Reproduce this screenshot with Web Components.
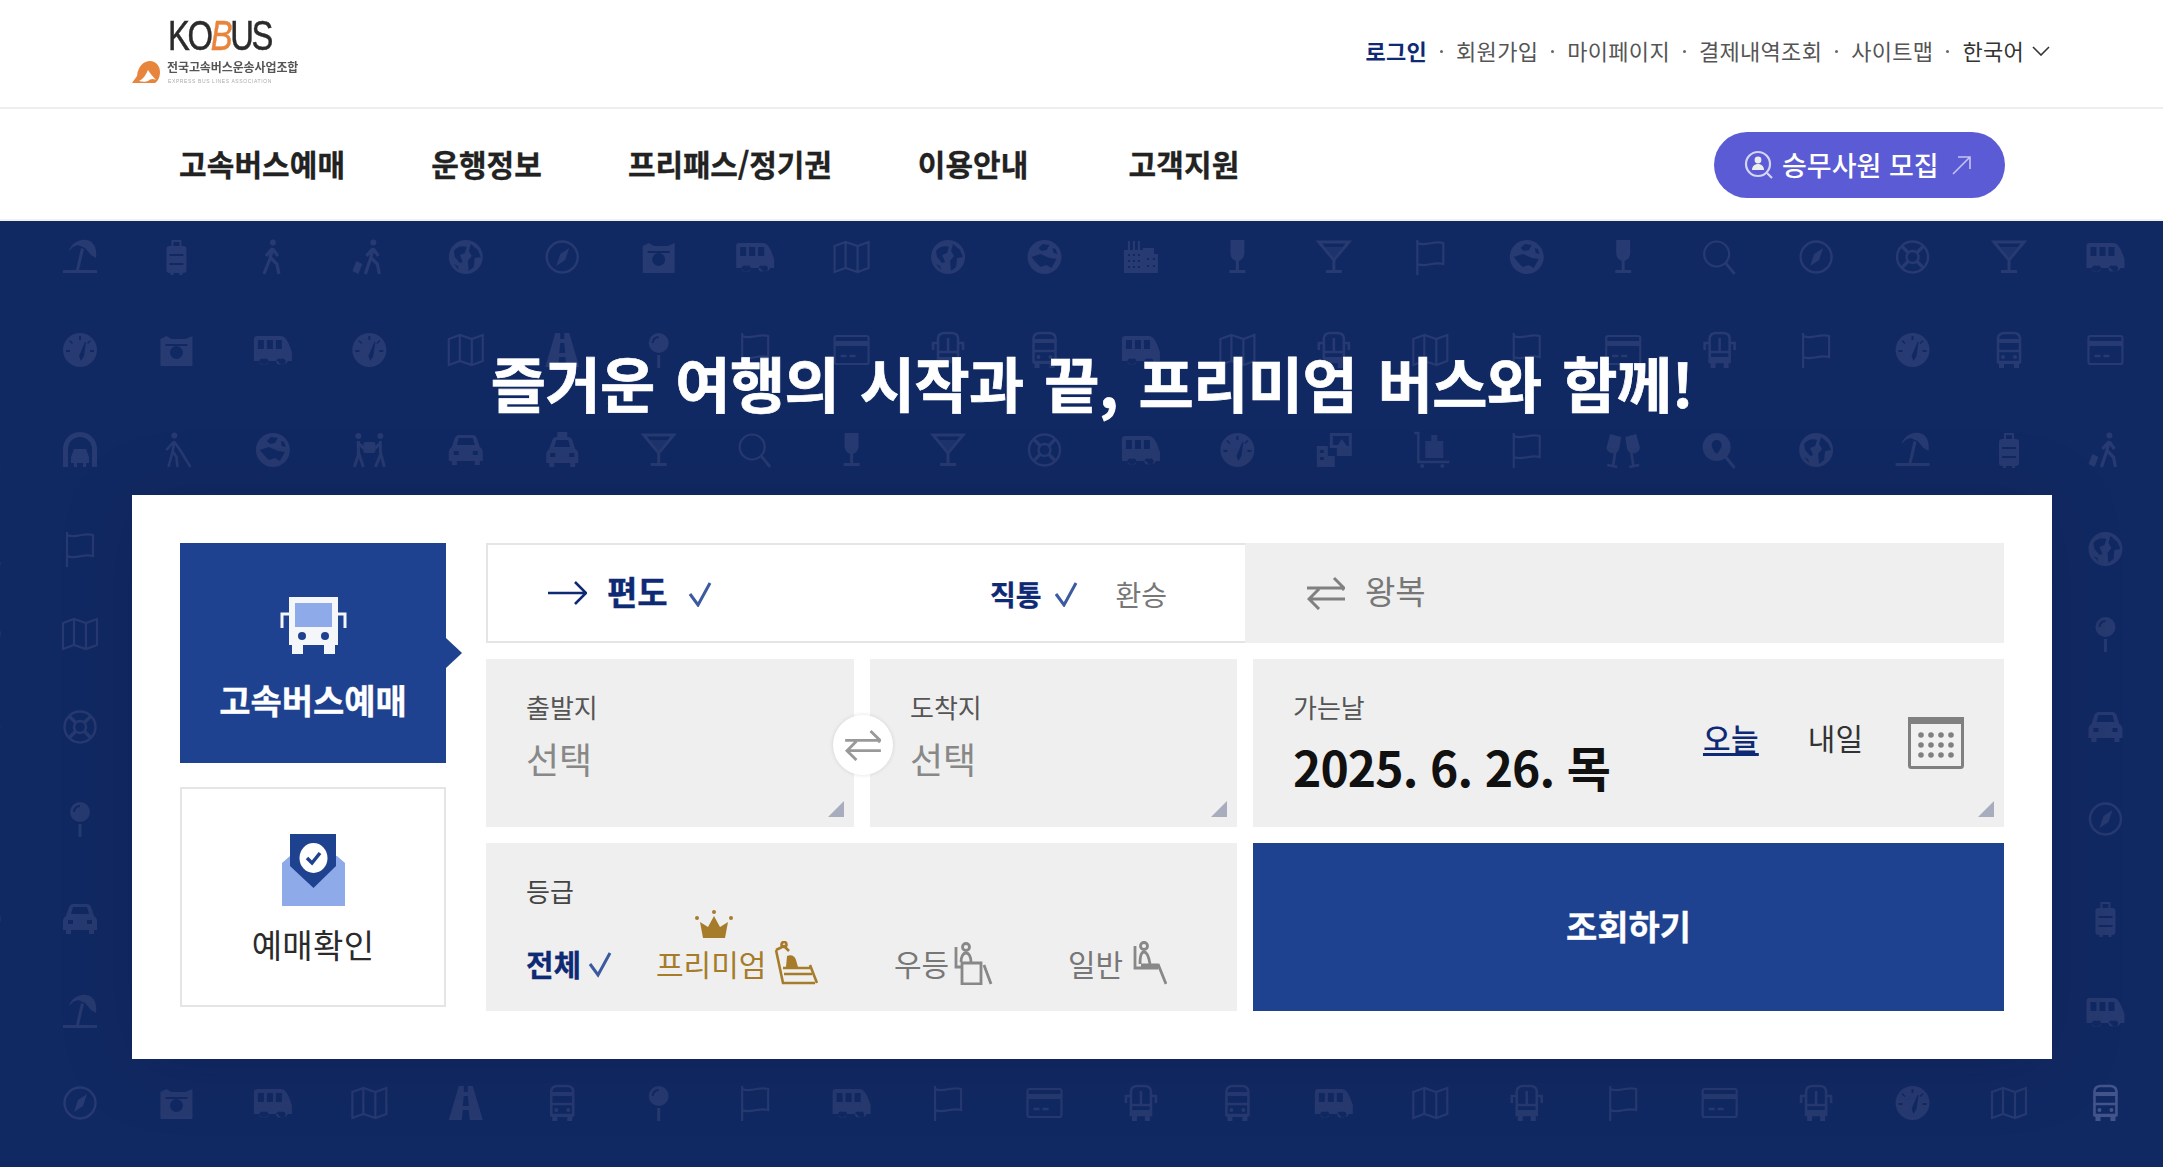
<!DOCTYPE html>
<html lang="ko">
<head>
<meta charset="utf-8">
<title>KOBUS</title>
<style>
  html, body { margin: 0; padding: 0; background: #fff; }
  body {
    font-family: "Noto Sans CJK KR", "Noto Sans", sans-serif;
    color: #333;
    overflow: hidden;
  }
</style>
</head>
<body>
<kb-header></kb-header>
<kb-nav></kb-nav>
<kb-hero></kb-hero>

<script>
const NAVY = '#0f2a75';
const BLUE = '#1f4290';

// Little helper, every element below does the same thing in its constructor
function shadow( host, html ) {
  const template = document.createElement( 'template' );
  template.innerHTML = html;
  const shadowRoot = host.attachShadow( {mode: 'open'} );
  shadowRoot.appendChild( template.content.cloneNode( true ) );
  return shadowRoot;
}

const CHECK = `<svg width="100%" height="100%" viewBox="0 0 24 24" fill="none" stroke="#3b5aa0" stroke-width="3"><path d="M2 12l8 11L22 1"/></svg>`;

class Logo extends HTMLElement {
  constructor() {
    super();
    shadow( this, `
      <style>
        :host { display: block; position: relative; width: 190px; height: 84px; filter: blur( .35px ); }
        .word {
          position: absolute; left: 36px; top: 10px; margin: 0;
          font: 400 42px/34px "Liberation Sans", sans-serif; color: #2b2b2b; -webkit-text-stroke: .5px #2b2b2b;
          letter-spacing: -3px; transform: scaleX( .78 ); transform-origin: 0 0; white-space: nowrap;
        }
        .word b { color: #e8853c; font-weight: 400; font-style: italic; -webkit-text-stroke: .5px #e8853c; }
        .ko { position: absolute; left: 35px; top: 50px; font-size: 12px; line-height: 16px; font-weight: 700; color: #555; letter-spacing: -.1px; white-space: nowrap; }
        .en { position: absolute; left: 36px; top: 69px; font: 5px/6px "Liberation Sans", sans-serif; color: #aaa; letter-spacing: .62px; white-space: nowrap; }
        svg { position: absolute; left: 0; top: 51px; }
      </style>
      <svg width="28" height="24" viewBox="0 0 28 24"><path fill="#e8853c" d="M0 23L5 16C6 6 12 1 18 1c6 0 10 5 10 11 0 5-2 9-5 11z"/><path fill="#fff" d="M7 21c4-2 7-6 9-11 2 3 5 7 8 10-3-2-6-1-8 1-2 1-6 1-9 0z"/></svg>
      <p class="word">KO<b>B</b>US</p>
      <span class="ko">전국고속버스운송사업조합</span>
      <span class="en">EXPRESS BUS LINES ASSOCIATION</span>
    `);
  }
}

class Header extends HTMLElement {
  constructor() {
    super();
    shadow( this, `
      <style>
        :host { display: block; box-sizing: border-box; height: 109px; border-bottom: 2px solid #eee; }
        .in { display: flex; align-items: flex-start; justify-content: space-between; width: 1918px; margin-left: 132px; height: 107px; }
        kb-logo { margin-top: 9px; }
        ul { display: flex; align-items: center; list-style: none; margin: 35px 0 0; padding: 0; font-size: 22px; line-height: 30px; color: #555; letter-spacing: .3px; }
        li { display: flex; align-items: center; }
        li + li::before { content: ""; width: 3px; height: 3px; border-radius: 50%; background: #666; margin: 2px 13px 0 13px; }
        .on { color: ${NAVY}; font-weight: 700; }
        .lang { color: #333; }
        svg { margin-left: 8px; margin-top: 2px; }
      </style>
      <div class="in">
        <kb-logo></kb-logo>
        <ul>
          <li><span class="on">로그인</span></li>
          <li>회원가입</li>
          <li>마이페이지</li>
          <li>결제내역조회</li>
          <li>사이트맵</li>
          <li><span class="lang">한국어</span><svg width="18" height="10" viewBox="0 0 18 10" fill="none" stroke="#333" stroke-width="1.6"><path d="M1 1l8 8 8-8"/></svg></li>
        </ul>
      </div>
    `);
  }
}

class Nav extends HTMLElement {
  constructor() {
    super();
    shadow( this, `
      <style>
        :host { display: block; box-sizing: border-box; height: 112px; border-bottom: 2px solid #f2f2f2; }
        nav { display: flex; align-items: center; width: 1826px; margin-left: 179px; height: 110px; }
        a { font-size: 30px; font-weight: 700; color: #222; letter-spacing: .1px; margin: -3px 86px 0 0; white-space: nowrap; -webkit-text-stroke: .3px #222; }
        a:nth-child( 3 ) { letter-spacing: -.15px; }
        a.wide { margin-right: 100px; }
        .pill {
          display: flex; align-items: center; margin: 2px 0 0 auto; box-sizing: border-box;
          width: 291px; height: 66px; border-radius: 33px; background: #5b5bd6; color: #fff;
          font-size: 27px; font-weight: 500; padding-left: 30px; white-space: nowrap;
        }
        .pill .t { margin: -2px 13px 0 8px; }
      </style>
      <nav>
        <a>고속버스예매</a>
        <a>운행정보</a>
        <a>프리패스/정기권</a>
        <a class="wide">이용안내</a>
        <a>고객지원</a>
        <div class="pill">
          <svg width="30" height="30" viewBox="0 0 30 30" fill="none" stroke="#d5d5f5" stroke-width="2.2"><circle cx="14" cy="14" r="12"/><path d="M23 23l5 5"/><circle cx="14" cy="10" r="3.4" fill="#eee" stroke="none"/><path d="M8 20c0-4 3-6 6-6s6 2 6 6z" fill="#eee" stroke="none"/></svg>
          <span class="t">승무사원 모집</span>
          <svg width="20" height="20" viewBox="0 0 20 20" fill="none" stroke="#c5c5f0" stroke-width="1.6"><path d="M1 19L18 2M6 2h12v12"/></svg>
        </div>
      </nav>
    `);
  }
}

// Background artwork of the hero: all icons of the travel pattern on one svg
const SYMBOLS = {
  umbrella: `<path d="M7 12C9 4 19-2 28 2c5 3 7 9 6 17l-5-3-6-7-7-3-5 2z"/><path d="M19 9l3 1-5 21h-3z"/><rect x="1" y="31" width="34" height="3"/>`,
  luggage: `<path fill-rule="evenodd" d="M13 7V1h10v6h2a3 3 0 0 1 3 3v21a3 3 0 0 1-3 3h-1v2h-3v-2h-6v2h-3v-2h-1a3 3 0 0 1-3-3V10a3 3 0 0 1 3-3zM15 7h6V3h-6zM11 15v2h14v-2zM11 24v2h14v-2z"/>`,
  walk: `<circle cx="18" cy="3.500" r="3"/><path d="M18 9l-3 11-6 15M16 19l6 6 2 10M17 10l-6 7M18 10l5 7" fill="none" stroke="currentColor" stroke-width="3.200"/>`,
  walkbag: `<circle cx="22" cy="3.500" r="3"/><path d="M22 9l-3 11-5 15M20 19l6 6 2 10M21 10l-6 7M22 10l5 7" fill="none" stroke="currentColor" stroke-width="3.200"/><path d="M5 22l6 3-4 10-6-3z"/>`,
  cane: `<circle cx="16" cy="3.500" r="3"/><path d="M16 9l-2 11-4 15M14 19l4 6 1 10M15 10l-7 8M16 10l5 7M21 17l11 18" fill="none" stroke="currentColor" stroke-width="2.600"/>`,
  globe: `<path fill-rule="evenodd" d="M18 1a17 17 0 1 0 0 34a17 17 0 1 0 0-34zM6 12c3-4 8-6 13-4l-2 6-5 2 3 7-3 1-5-6zM23 5l7 6 3 7-6 1-1 9-5 4-1-10 4-5-3-5zM6 25l4 2 1 4z"/>`,
  globe2: `<path fill-rule="evenodd" d="M18 1a17 17 0 1 0 0 34a17 17 0 1 0 0-34zM16 5l7 1-3 5-5 1-3-3zM5 18l9-3 9 4 7 1-5 9-5-3-6 2-5-5zM26 9l3 1 2 5-4-1z"/>`,
  compass: `<circle cx="18" cy="18" r="15.500" fill="none" stroke="currentColor" stroke-width="2.400"/><path d="M25 9l-4 12-9 6 4-12z"/>`,
  camera: `<path fill-rule="evenodd" d="M2 7l6-3 5 3h14l7-3v29a1 1 0 0 1-1 1H3a1 1 0 0 1-1-1zM18 14a6.500 6.500 0 1 0 0 13a6.500 6.500 0 1 0 0-13zM7 12v2h22v-2z"/>`,
  van: `<path fill-rule="evenodd" d="M-1 7a3 3 0 0 1 3-3h24c4 0 6 4 8 8l3 8v9h-4a5.500 5.500 0 0 1-10 0H14a5.500 5.500 0 0 1-10 0H-1zM3 8v9h6V8zM12 8v9h6V8zM21 8v9h6V8zM9 27a3 3 0 1 0 0 5a3 3 0 1 0 0-5zM26 27a3 3 0 1 0 0 5a3 3 0 1 0 0-5z"/>`,
  map: `<path fill="none" stroke="currentColor" stroke-width="2.200" d="M1 7l11-4 12 4 11-4v26l-11 4-12-4-11 4zM12 3v26M24 7v26"/>`,
  flag: `<path fill="none" stroke="currentColor" stroke-width="2.200" d="M5 1v35M5 4c9 4 16-3 26 0v21c-10-3-17 4-26 0"/>`,
  city: `<path fill-rule="evenodd" d="M1 34V11h4V2h2v9h3V2h2v9h3V2h2v9h3V9h11v6h4v19zM5 15v2h2v-2zM10 15v2h2v-2zM15 15v2h2v-2zM5 21v2h2v-2zM10 21v2h2v-2zM15 21v2h2v-2zM5 27v2h2v-2zM10 27v2h2v-2zM15 27v2h2v-2zM24 19v2h2v-2zM30 19v2h2v-2zM24 26v2h2v-2zM30 26v2h2v-2z"/>`,
  wine: `<path d="M11 1h14v13a7 8 0 0 1-14 0z"/><rect x="16.500" y="21" width="3" height="11"/><rect x="10" y="31" width="16" height="3"/>`,
  martini: `<path fill="none" stroke="currentColor" stroke-width="3" d="M3 3h30L18 21zM18 21v11"/><path d="M9 8h18l-9 11z" opacity=".6"/><rect x="10" y="31" width="16" height="3"/>`,
  search: `<circle cx="15" cy="15" r="12.500" fill="none" stroke="currentColor" stroke-width="2.200"/><path d="M24 24l9 11" stroke="currentColor" stroke-width="2.800"/>`,
  buoy: `<g fill="none" stroke="currentColor" stroke-width="2.400"><circle cx="18" cy="18" r="15.500"/><circle cx="18" cy="18" r="6"/><path d="M7 7l7 7M29 7l-7 7M7 29l7-7M29 29l-7-7" stroke-width="3.200"/></g>`,
  gauge: `<path fill-rule="evenodd" d="M18 1a17 17 0 1 0 0 34a17 17 0 1 0 0-34zM17 4v4h2V4zM7 9l3 3 1-1-3-3zM28 8l-3 3 1 1 3-3zM23 10l-6 14 2 5 3-5 2-14zM4 18v2h4v-2zM28 18v2h4v-2z"/>`,
  road: `<path fill-rule="evenodd" d="M11 1h5v6h4V1h5l10 34H22l-1-10h-6l-1 10H1zM16 11l-1 10h6l-1-10z"/>`,
  pin: `<path fill-rule="evenodd" d="M18 1a10 10 0 1 0 0 20a10 10 0 1 0 0-20zM18 4a7 7 0 0 0-7 7h2a5 5 0 0 1 5-5z"/><rect x="16.500" y="23" width="3" height="13"/>`,
  card: `<rect x="1" y="4" width="34" height="28" rx="2" fill="none" stroke="currentColor" stroke-width="2.200"/><rect x="1" y="9" width="34" height="5"/><path d="M7 24h6M16 24h6" stroke="currentColor" stroke-width="2.400"/>`,
  bus: `<path fill="none" stroke="currentColor" stroke-width="2.600" d="M7 6c0-3 3-5 6-5h10c3 0 6 2 6 5v24H7zM7 19h22"/><path d="M7 7h22v4H7zM7 29h22v3H7zM8 32h5v4H8zM23 32h5v4h-5z"/><circle cx="12" cy="25" r="2"/><circle cx="24" cy="25" r="2"/>`,
  busround: `<path fill="none" stroke="currentColor" stroke-width="2.600" d="M8 6c0-3 3-5 6-5h8c3 0 6 2 6 5v24H8zM8 20h20M18 6v14M8 11H3v7M28 11h5v7"/><path d="M8 25h20v6H8zM9 31h5v5H9zM22 31h5v5h-5z"/>`,
  tunnel: `<path fill-rule="evenodd" d="M1 35V17a17 17 0 0 1 34 0v18h-5V17a12 12 0 0 0-24 0v18zM12 17h12l3 8v6h-3v4h-3v-4h-6v4h-3v-4H9v-6z"/>`,
  movers: `<circle cx="7" cy="4" r="3"/><circle cx="29" cy="4" r="3"/><path d="M7 9v14l-4 12M7 20l5 15M29 9v14l-5 12M29 20l4 15M7 11l6 6M29 11l-6 6" fill="none" stroke="currentColor" stroke-width="3"/><rect x="12" y="10" width="12" height="11" rx="2"/>`,
  car: `<path fill-rule="evenodd" d="M4 15l3-9c1-2 2-3 4-3h14c2 0 3 1 4 3l3 9c2 1 3 3 3 5v9h-3v4h-5v-4H9v4H4v-4H1v-9c0-2 1-4 3-5zM9 13h18l-2-7H11zM6 19v4h5v-4zM25 19v4h5v-4z"/>`,
  taxi: `<rect x="13" y="0" width="10" height="5"/><path fill-rule="evenodd" d="M5 17l3-9c1-2 2-3 4-3h12c2 0 3 1 4 3l3 9c2 1 3 3 3 5v9h-3v4h-5v-4H10v4H5v-4H2v-9c0-2 1-4 3-5zM10 15h16l-2-7H12zM6 21v4h5v-4zM25 21v4h5v-4z"/>`,
  photos: `<path fill-rule="evenodd" d="M14 1h22v23H21v-8h-7zM17 4v9h5l4-6 5 7 2 0V4z"/><path fill-rule="evenodd" d="M1 14h11v21H10V35H1zM4 18v3h4v-3zM4 25v3h4v-3zM12 24h7v11h-7z"/>`,
  cart: `<path fill="none" stroke="currentColor" stroke-width="2.400" d="M2 1h4v29h31"/><path d="M13 9h6V3h6v6h6v17H13z" opacity=".9"/><circle cx="10" cy="34" r="2"/><circle cx="30" cy="34" r="2"/>`,
  cheers: `<path d="M5 2l11 3-2 12c-1 4-5 5-8 4-3-1-6-4-4-8z"/><path d="M31 2L20 5l2 12c1 4 5 5 8 4 3-1 6-4 4-8z"/><path d="M10 20l-2 13M26 20l2 13M2 33l10 2M24 35l10-2" fill="none" stroke="currentColor" stroke-width="2.600"/>`,
  findpin: `<path fill-rule="evenodd" d="M15 1a14 14 0 1 0 0 28a14 14 0 1 0 0-28zM15 8a5 5 0 0 0-5 5c0 4 5 9 5 9s5-5 5-9a5 5 0 0 0-5-5z"/><path d="M24 25l9 11" stroke="currentColor" stroke-width="3"/>`
};

const ROW_Y = [ 257, 350, 450, 549, 634, 727, 819, 919, 1012, 1103 ];
const ROWS = {
  0: 'umbrella luggage walk walkbag globe compass camera van map globe globe2 city wine martini flag globe2 wine search compass buoy martini van',
  1: 'gauge camera van gauge map road pin flag card busround bus van map busround map flag card busround flag gauge bus card',
  2: 'tunnel cane globe2 movers car taxi martini search wine martini buoy van gauge photos cart flag cheers findpin globe umbrella luggage walkbag',
  9: 'compass camera van map road bus pin flag van flag card busround bus van map busround flag card busround gauge map bus'
};
const LEFT = [ , , , 'flag', 'map', 'buoy', 'pin', 'car', 'umbrella' ];
const RIGHT = [ , , , 'globe', 'pin', 'car', 'compass', 'luggage', 'van' ];
const OFF = [ , , 'road', 'umbrella', 'globe', 'buoy', 'pin', 'globe', 'pin' ];

class Pattern extends HTMLElement {
  constructor() {
    super();
    const defs = Object.keys( SYMBOLS ).map( ( name ) => `<symbol id="${name}" viewBox="-3 -3 42 42" overflow="visible">${SYMBOLS[name]}</symbol>` ).join( '' );
    const cell = ( name, col, row, extra = '' ) => {
      if( !name ) return '';
      const x = 80 + col * 96.45 - 21;
      const y = ROW_Y[row] - 221 - 21;
      return `<use href="#${name}" x="${x}" y="${y}" width="42" height="42" ${extra}/>`;
    };
    let cells = '';
    Object.keys( ROWS ).forEach( ( row ) => {
      ROWS[row].split( ' ' ).forEach( ( name, col ) => {
        cells += cell( name, col, Number( row ), ( row === '9' && col === 21 ) ? 'color="#43548a"' : '' );
      } );
    } );
    LEFT.forEach( ( name, row ) => cells += cell( name, 0, row ) );
    RIGHT.forEach( ( name, row ) => cells += cell( name, 21, row ) );
    OFF.forEach( ( name, row ) => cells += cell( name, -1, row ) );
    shadow( this, `
      <style>
        :host { display: block; position: absolute; inset: 0; overflow: hidden; }
        svg { display: block; color: #273a71; fill: currentColor; }
      </style>
      <svg width="2163" height="946"><defs>${defs}</defs>${cells}</svg>
    `);
  }
}

class Tab extends HTMLElement {
  constructor() {
    super();
    shadow( this, `
      <style>
        :host {
          display: flex; flex-direction: column; align-items: center; position: relative; box-sizing: border-box;
          height: 220px; border: 2px solid #e5e5e5; padding-top: 45px; color: #2b2b2b; font-size: 33px; line-height: 44px; letter-spacing: .3px;
        }
        :host( [active] ) { background: ${BLUE}; border-color: ${BLUE}; color: #fff; font-weight: 700; padding-top: 52px; font-size: 34px; letter-spacing: 0; -webkit-text-stroke: .3px #fff; }
        :host( [active] )::after {
          content: ""; position: absolute; right: -18px; top: 93px; width: 16px; height: 30px;
          background: ${BLUE}; clip-path: polygon( 0 0, 100% 50%, 0 100% );
        }
        .label { white-space: nowrap; }
      </style>
      <slot name="icon"></slot>
      <span class="label"><slot></slot></span>
    `);
  }
}

class Field extends HTMLElement {
  constructor() {
    super();
    shadow( this, `
      <style>
        :host {
          display: block; position: relative; box-sizing: border-box; height: 168px; background: #efefef;
          padding: 33px 0 0 40px;
        }
        .label { display: block; font-size: 26px; line-height: 30px; color: #555; }
        .corner {
          position: absolute; right: 10px; bottom: 10px; width: 16px; height: 16px;
          background: #a8adbd; clip-path: polygon( 100% 0, 100% 100%, 0 100% );
        }
      </style>
      <span class="label"><slot name="label"></slot></span>
      <slot></slot>
      <i class="corner" part="corner"></i>
    `);
  }
}

class Seat extends HTMLElement {
  constructor() {
    super();
    const kind = this.getAttribute( 'kind' );
    const art = {
      premium: `<svg width="44" height="44" viewBox="0 0 44 44" fill="none" stroke="#a67c2a" stroke-width="2.600"><path d="M2 9l8-4 5 5M2 9l7 33h32M36 24l7 18M9 27h27M10 33h28"/><circle cx="10" cy="3.500" r="2.500"/><path d="M13 15c4-2 8 0 9 4l2 7H12z" fill="#a67c2a" stroke="none"/></svg>`,
      prestige: `<svg width="40" height="44" viewBox="0 0 40 44" fill="none" stroke="#888" stroke-width="2.800"><path d="M3 6v20h6M9 22h19v21H9z"/><circle cx="13" cy="6" r="3.500"/><path d="M8 21c0-5 2-9 5-9s5 4 5 9M31 24l7 19"/></svg>`,
      normal: `<svg width="34" height="44" viewBox="0 0 34 44" fill="none" stroke="#888" stroke-width="2.800"><path d="M2 5v22h22v-3H8"/><circle cx="11" cy="5" r="3.500"/><path d="M7 23c0-8 1-12 4-12s5 6 6 12M25 23l8 20"/></svg>`
    }[kind];
    shadow( this, `<style>:host { display: block; line-height: 0; }</style>${art}` );
  }
}

class Option extends HTMLElement {
  constructor() {
    super();
    shadow( this, `
      <style>
        :host { display: flex; align-items: center; position: relative; height: 40px; font-size: 30px; line-height: 40px; color: #777; white-space: nowrap; }
        :host( [on] ) { color: ${NAVY}; font-weight: 700; -webkit-text-stroke: .3px ${NAVY}; }
        :host( [gold] ) { color: #a67c2a; }
        ::slotted( kb-seat ) { margin-left: 8px; }
        ::slotted( .crown ) { position: absolute; left: 39px; top: -33px; }
      </style>
      <slot></slot>
    `);
  }
}

const SWAP = ( w, h, color ) => `<svg width="${w}" height="${h}" viewBox="0 0 38 34" fill="none" stroke="${color}" stroke-width="3"><path d="M0 12h36M27 2l10 10-2 2M38 23H3M12 13L2 23l10 10"/></svg>`;

class Booking extends HTMLElement {
  constructor() {
    super();
    shadow( this, `
      <style>
        :host {
          display: grid; grid-template-columns: 266px 1518px; gap: 40px; box-sizing: border-box; position: relative;
          width: 1920px; height: 564px; padding: 48px; background: #fff;
          box-shadow: 0 6px 70px rgba( 0, 0, 30, .16 );
        }
        .side { display: flex; flex-direction: column; gap: 24px; }
        .side svg { display: block; margin-bottom: 24px; }
        .side .mail { margin-bottom: 16px; }
        .form { display: grid; grid-template-columns: 751px 751px; grid-template-rows: 100px 168px 168px; gap: 16px; }
        .way { grid-column: 1 / 3; display: grid; grid-template-columns: 759px 759px; }
        .one { display: flex; align-items: center; box-sizing: border-box; border: 2px solid #e5e5e5; border-right: 0; padding: 0 78px 0 60px; }
        .one b { font-size: 33px; color: ${NAVY}; margin: -4px 20px 0; line-height: 44px; -webkit-text-stroke: .3px ${NAVY}; }
        .one .c1 { width: 24px; height: 26px; margin-top: 2px; }
        .one .direct { margin-left: auto; font-size: 28px; margin-right: 13px; margin-top: 2px; }
        .one .c2 { width: 24px; height: 26px; margin-top: 2px; }
        .one .sub { font-size: 28px; color: #777; margin-left: 37px; line-height: 44px; margin-top: 2px; }
        .two { display: flex; align-items: center; background: #efefef; padding-left: 62px; font-size: 33px; color: #777; line-height: 44px; }
        .two span { margin-top: -6px; margin-left: 20px; }
        .pair { display: grid; grid-template-columns: 368px 367px; gap: 16px; position: relative; }
        .val { display: block; margin-top: 14px; font-size: 36px; line-height: 44px; color: #888; }
        .swap {
          position: absolute; left: 347px; top: 56px; width: 60px; height: 60px; border-radius: 50%; background: #fff;
          box-shadow: 0 0 4px rgba( 0, 0, 0, .12 ); display: flex; align-items: center; justify-content: center;
        }
        .date { position: relative; }
        .day { display: block; margin-top: 14px; font-size: 48px; font-weight: 700; line-height: 60px; color: #111; letter-spacing: -.9px; white-space: nowrap; }
        .quick { position: absolute; display: flex; align-items: center; right: 40px; top: 58px; font-size: 30px; line-height: 40px; color: #333; }
        .quick u, .quick span { position: relative; top: -6px; }
        .quick u { color: ${NAVY}; font-weight: 500; letter-spacing: .3px; text-decoration-thickness: 3px; text-underline-offset: 3px; margin-right: 49px; }
        .quick svg { margin-left: 45px; }
        .grade { display: block; position: relative; height: 168px; box-sizing: border-box; background: #efefef; padding: 33px 0 0 40px; }
        .grade .label { display: block; font-size: 26px; line-height: 30px; color: #444; }
        .opts { display: flex; margin-top: 37px; }
        .opts kb-option:nth-child( 1 ) { width: 130px; }
        .opts kb-option:nth-child( 2 ) { width: 238px; }
        .opts kb-option:nth-child( 3 ) { width: 174px; }
        .go { display: flex; align-items: center; justify-content: center; background: ${BLUE}; color: #fff; font-size: 34px; font-weight: 700; padding-bottom: 3px; -webkit-text-stroke: .3px #fff; }
      </style>
      <div class="side">
        <kb-tab active>
          <svg slot="icon" width="67" height="57" viewBox="0 0 67 57">
            <path fill="#f5f6fa" d="M9 0h49v48h-3v9H44v-9H23v9H12v-9H9z"/>
            <path fill="#8eaae8" d="M15 6h37v24H15z"/>
            <circle cx="22" cy="39" r="4" fill="${BLUE}"/><circle cx="45" cy="39" r="4" fill="${BLUE}"/>
            <path fill="none" stroke="#f5f6fa" stroke-width="3" d="M9 17H2v14M58 17h7v14"/>
          </svg>
          고속버스예매
        </kb-tab>
        <kb-tab>
          <svg class="mail" slot="icon" width="63" height="72" viewBox="0 0 63 72">
            <path fill="#8eaae8" d="M0 29l8-7h47l8 7v43H0z"/>
            <path fill="${BLUE}" d="M8 0h46v32L31.500 54 8 32z"/>
            <ellipse cx="31.500" cy="24" rx="14" ry="15" fill="#fff"/>
            <path fill="none" stroke="${BLUE}" stroke-width="3.500" d="M25 24l5 5 8-10"/>
          </svg>
          예매확인
        </kb-tab>
      </div>
      <div class="form">
        <div class="way">
          <div class="one">
            <svg width="39" height="26" viewBox="0 0 39 26" fill="none" stroke="${NAVY}" stroke-width="2.600"><path d="M0 13h37M27 2l11 11-11 11"/></svg>
            <b>편도</b>
            <span class="c1">${CHECK}</span>
            <b class="direct">직통</b>
            <span class="c2">${CHECK}</span>
            <span class="sub">환승</span>
          </div>
          <div class="two">
            ${SWAP( 38, 34, '#808080' )}
            <span>왕복</span>
          </div>
        </div>
        <div class="pair">
          <kb-field><span slot="label">출발지</span><span class="val">선택</span></kb-field>
          <kb-field><span slot="label">도착지</span><span class="val">선택</span></kb-field>
          <div class="swap">${SWAP( 36, 32, '#999' )}</div>
        </div>
        <kb-field class="date">
          <span slot="label">가는날</span>
          <span class="day">2025. 6. 26. 목</span>
          <div class="quick">
            <u>오늘</u>
            <span>내일</span>
            <svg width="56" height="52" viewBox="0 0 56 52"><rect x="1.500" y="1.500" width="53" height="49" rx="2" fill="#f0f0f0" stroke="#808080" stroke-width="3"/><rect x="0" y="0" width="56" height="7" fill="#808080"/><g fill="#808080"><circle cx="13" cy="18" r="2.800"/><circle cx="23" cy="18" r="2.800"/><circle cx="33" cy="18" r="2.800"/><circle cx="43" cy="18" r="2.800"/><circle cx="13" cy="28" r="2.800"/><circle cx="23" cy="28" r="2.800"/><circle cx="33" cy="28" r="2.800"/><circle cx="43" cy="28" r="2.800"/><circle cx="13" cy="38" r="2.800"/><circle cx="23" cy="38" r="2.800"/><circle cx="33" cy="38" r="2.800"/><circle cx="43" cy="38" r="2.800"/></g></svg>
          </div>
        </kb-field>
        <div class="grade">
          <span class="label">등급</span>
          <div class="opts">
            <kb-option on>전체<span style="width:24px;height:28px;margin-left:7px;margin-top:-8px;display:block">${CHECK}</span></kb-option>
            <kb-option gold>
              <svg class="crown" width="38" height="28" viewBox="0 0 38 28" fill="#a67c2a"><circle cx="19" cy="2" r="2"/><circle cx="2" cy="8" r="2"/><circle cx="36" cy="8" r="2"/><path d="M5 12l8 5 6-11 6 11 8-5-3 16H8z"/></svg>
              프리미엄<kb-seat kind="premium"></kb-seat>
            </kb-option>
            <kb-option>우등<kb-seat kind="prestige" style="margin-left:4px"></kb-seat></kb-option>
            <kb-option>일반<kb-seat kind="normal" style="margin-left:10px"></kb-seat></kb-option>
          </div>
        </div>
        <div class="go">조회하기</div>
      </div>
    `);
  }
}

class Hero extends HTMLElement {
  constructor() {
    super();
    shadow( this, `
      <style>
        :host { display: block; position: relative; box-sizing: border-box; height: 946px; background: #112963; padding: 126px 0 0 132px; overflow: hidden; }
        h1 {
          position: relative; width: 1920px; margin: 0 0 78px; text-align: center; color: #fff;
          font-size: 60px; line-height: 70px; font-weight: 700; letter-spacing: -.6px; word-spacing: 4.5px; -webkit-text-stroke: .7px #fff;
        }
      </style>
      <kb-pattern></kb-pattern>
      <h1>즐거운 여행의 시작과 끝, 프리미엄 버스와 함께!</h1>
      <kb-booking></kb-booking>
    `);
  }
}

window.customElements.define( 'kb-logo', Logo );
window.customElements.define( 'kb-header', Header );
window.customElements.define( 'kb-nav', Nav );
window.customElements.define( 'kb-pattern', Pattern );
window.customElements.define( 'kb-tab', Tab );
window.customElements.define( 'kb-field', Field );
window.customElements.define( 'kb-seat', Seat );
window.customElements.define( 'kb-option', Option );
window.customElements.define( 'kb-booking', Booking );
window.customElements.define( 'kb-hero', Hero );
</script>
</body>
</html>
